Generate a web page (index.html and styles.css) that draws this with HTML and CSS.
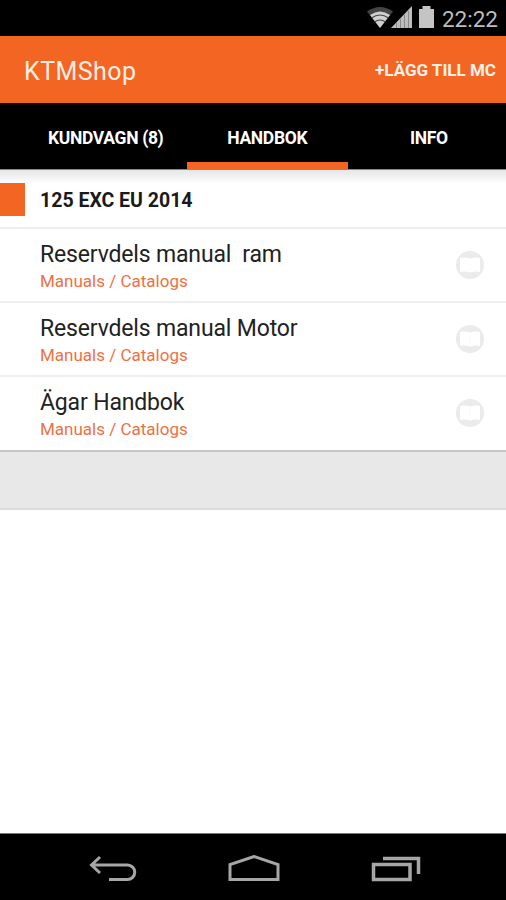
FILE: index.html
```html
<!DOCTYPE html>
<html lang="sv">
<head>
  <meta charset="UTF-8" />
  <meta name="viewport" content="width=device-width, initial-scale=1.0"/>
  <title>KTMShop</title>
  <link rel="stylesheet" href="styles.css">
</head>
<body>
  <div class="status-bar">
    <svg class="signals" width="70" height="24" viewBox="0 0 70 24">
      <path d="M1 5.5Q14 -3.5 27 5.5L14 22Z" fill="#444"/>
      <path d="M4 9Q14 2 24 9L14 22Z" fill="#cfcfcf"/>
      <path d="M5.500 12Q14 6 22.500 12M8.500 16Q14 12 19.500 16" fill="none" stroke="#444" stroke-width="1.200"/>
      <path d="M25 22L46 0V22Z" fill="#bdbdbd"/>
      <path d="M30.500 17V22M34.500 13V22M38.500 9V22M42.500 5V22" stroke="#888" stroke-width="1"/>
      <path d="M53 3H56.500V0H64.500V3H68V22H53Z" fill="#c4c4c4"/>
    </svg>
    <span class="clock">22:22</span>
  </div>
  <header>
    <div class="logo">KTMShop</div>
    <a class="add" href="#">+LÄGG TILL MC</a>
  </header>
  <nav class="tabs">
    <a href="#">KUNDVAGN (8)</a>
    <a href="#" class="active">HANDBOK</a>
    <a href="#">INFO</a>
  </nav>

  <main>
    <section class="list">
      <div class="model"><h2>125 EXC EU 2014</h2></div>
      <a class="row" href="#">
        <div>
          <h3>Reservdels manual&nbsp; ram</h3>
          <p>Manuals / Catalogs</p>
        </div>
        <svg class="book" width="28" height="28" viewBox="0 0 28 28">
          <circle cx="14" cy="14" r="14" fill="#ebebeb"/>
          <path d="M4 7Q9 6 14 7.500Q19 6 24 7V21Q19 20 14 21.500Q9 20 4 21Z" fill="#fff"/>
          <path d="M14 8V20" stroke="#fafafa"/>
        </svg>
      </a>
      <a class="row" href="#">
        <div>
          <h3>Reservdels manual Motor</h3>
          <p>Manuals / Catalogs</p>
        </div>
        <svg class="book" width="28" height="28" viewBox="0 0 28 28">
          <circle cx="14" cy="14" r="14" fill="#ebebeb"/>
          <path d="M4 7Q9 6 14 7.500Q19 6 24 7V21Q19 20 14 21.500Q9 20 4 21Z" fill="#fff"/>
          <path d="M14 8V20" stroke="#fafafa"/>
        </svg>
      </a>
      <a class="row" href="#">
        <div>
          <h3>Ägar Handbok</h3>
          <p>Manuals / Catalogs</p>
        </div>
        <svg class="book" width="28" height="28" viewBox="0 0 28 28">
          <circle cx="14" cy="14" r="14" fill="#ebebeb"/>
          <path d="M4 7Q9 6 14 7.500Q19 6 24 7V21Q19 20 14 21.500Q9 20 4 21Z" fill="#fff"/>
          <path d="M14 8V20" stroke="#fafafa"/>
        </svg>
      </a>
    </section>
    <div class="list-footer"></div>
  </main>

  <footer class="nav-bar">
    <svg width="48" height="28" viewBox="0 0 48 28">
      <path d="M11 2L2.500 10L11 18M2.500 10H38.500A7.250 7.250 0 0 1 38.500 24.500H20" fill="none" stroke="#a6a6a6" stroke-width="3"/>
    </svg>
    <svg width="54" height="28" viewBox="0 0 54 28">
      <path d="M3 24.500V9.500L27 1.500L51 9.500V24.500Z" fill="none" stroke="#a6a6a6" stroke-width="3"/>
    </svg>
    <svg width="50" height="28" viewBox="0 0 50 28">
      <path d="M2.500 9.500H39V24.500H2.500ZM12 3.500H47.500V19" fill="none" stroke="#a6a6a6" stroke-width="3.500"/>
    </svg>
  </footer>
</body>
</html>
```
FILE: styles.css
```css
/* Base */
* { box-sizing:border-box; }
body { margin:0; height:900px; display:flex; flex-direction:column; overflow:hidden; background:#fff; color:#222; font-family:Roboto, sans-serif; }
a { text-decoration:none; color:inherit; }
h2, h3, p { margin:0; white-space:nowrap; }
svg { display:block; flex:none; }
/* Status bar */
.status-bar { height:36px; flex:none; background:#000; display:flex; align-items:center; justify-content:flex-end; gap:6px; padding-right:8px; }
.signals { margin-bottom:1px; }
.clock { color:#bdbdbd; font-size:22.5px; line-height:34px; padding-top:2px; }
/* Header */
header { height:67px; flex:none; background:#f36523; color:#fff; display:flex; align-items:center; justify-content:space-between; padding:2px 10px 0 24px; }
.logo { font-size:25px; color:#ffeee5; letter-spacing:0.45px; padding-top:1px; }
.add { font-size:17px; font-weight:700; color:#fff0e8; padding-bottom:2px; }
/* Tabs */
.tabs { height:67px; flex:none; background:#000; border-bottom:1px solid #e9683a; display:flex; padding-left:25px; }
.tabs a { flex:none; width:161.5px; color:#fff; font-size:17.5px; font-weight:700; letter-spacing:-0.35px; line-height:70px; height:66px; text-align:center; }
.tabs .active { box-shadow:inset 0 -7px #f36523; }
/* List */
main { flex:1; }
.list { border-bottom:2px solid #c6c6c6; }
.model { height:57px; background:linear-gradient(#e4e6e7, #fff 14px); display:flex; align-items:center; padding-top:2px; }
.model::before { content:''; width:25px; height:33px; background:#f36523; margin:0 15px 1px 0; }
.model h2 { font-size:19.5px; font-weight:700; color:#1a1a1a; padding-top:2px; }
.row { height:74px; border-top:2px solid #eee; display:flex; justify-content:space-between; padding:12px 22px 0 40px; }
.row h3 { font-size:23px; font-weight:400; line-height:27px; letter-spacing:-0.16px; }
.row p { font-size:17px; line-height:26px; color:#ee7044; }
.row:last-child { height:75px; }
.book { margin-top:10px; }
.list-footer { height:58px; background:#e8e8e8; border-bottom:2px solid #dcdcdc; }
/* Navigation bar */
.nav-bar { height:67px; flex:none; background:#000; border-top:1px solid #777; display:flex; justify-content:space-between; align-items:center; padding:3px 85px 0 89px; }
```
